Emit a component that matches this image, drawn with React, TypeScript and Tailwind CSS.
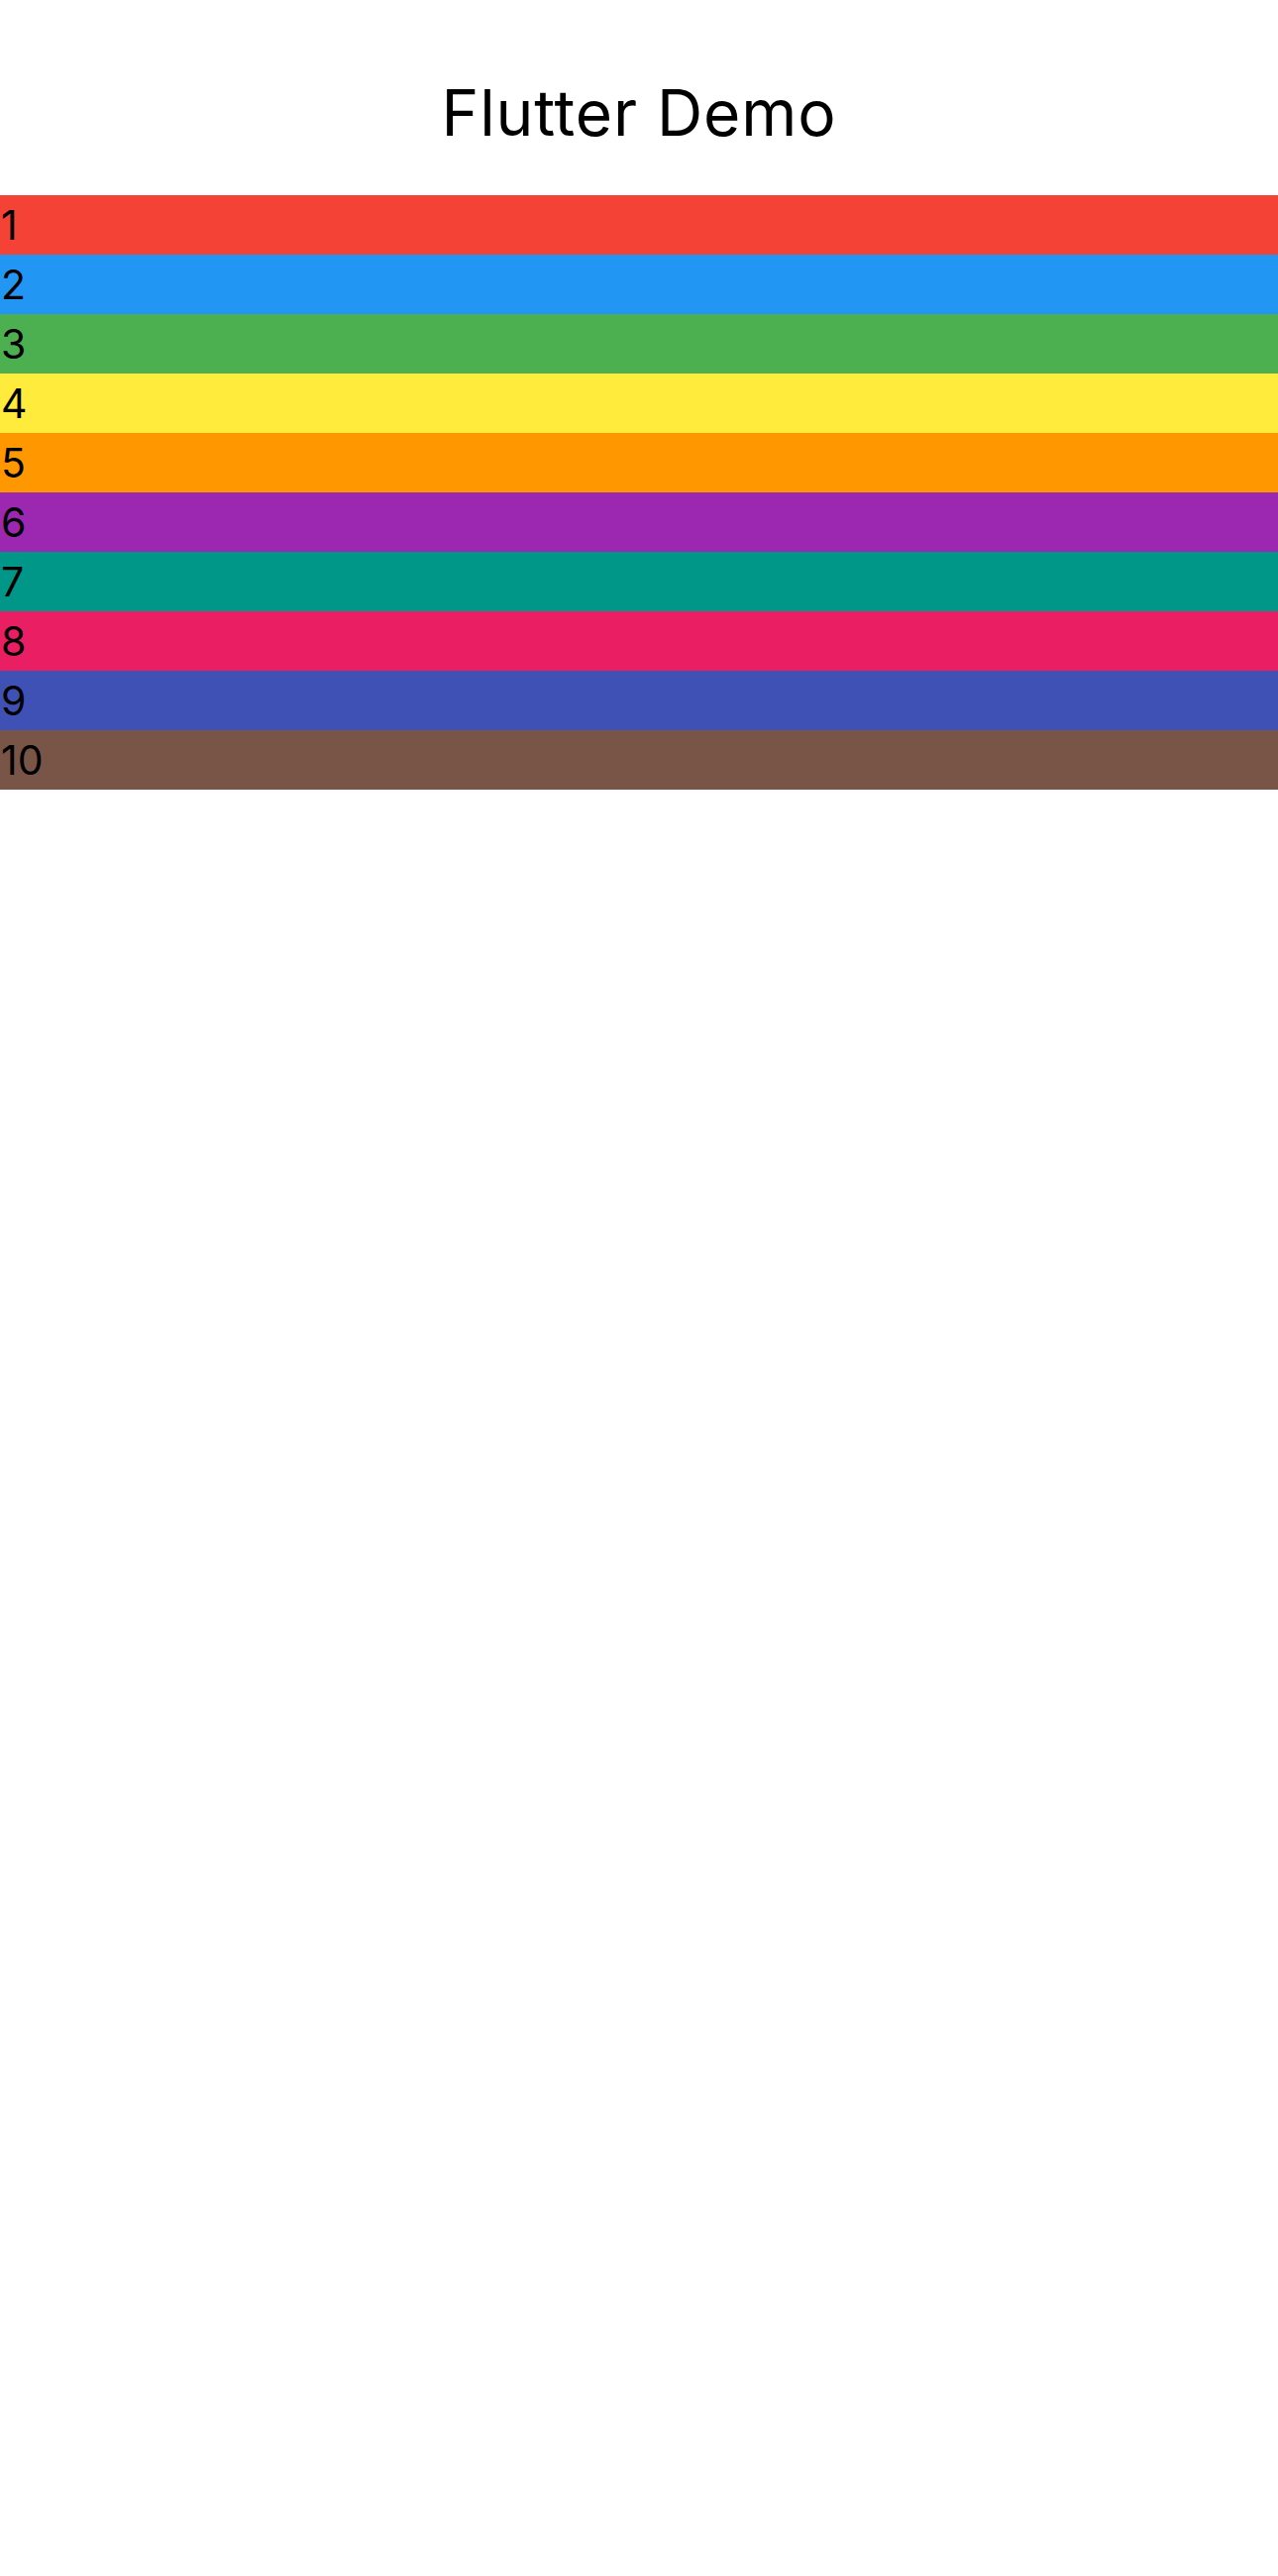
const rows = [
  { n: 1, bg: "bg-[#f44336]" },
  { n: 2, bg: "bg-[#2196f3]" },
  { n: 3, bg: "bg-[#4caf50]" },
  { n: 4, bg: "bg-[#ffeb3b]" },
  { n: 5, bg: "bg-[#ff9800]" },
  { n: 6, bg: "bg-[#9c27b0]" },
  { n: 7, bg: "bg-[#009688]" },
  { n: 8, bg: "bg-[#e91e63]" },
  { n: 9, bg: "bg-[#3f51b5]" },
  { n: 10, bg: "bg-[#795548]" },
];

export default function App() {
  return (
    <div className="min-h-[2600px] w-full bg-white font-['Inter',sans-serif] text-black">
      <header className="h-[197px] pt-[75px] text-center text-[64px] leading-[77px] tracking-[0.9px]">
        Flutter Demo
      </header>
      <div>
        {rows.map((r) => (
          <div key={r.n} className={`h-[60px] pl-[1px] text-[41px] leading-[60px] ${r.bg}`}>
            {r.n}
          </div>
        ))}
      </div>
    </div>
  );
}
